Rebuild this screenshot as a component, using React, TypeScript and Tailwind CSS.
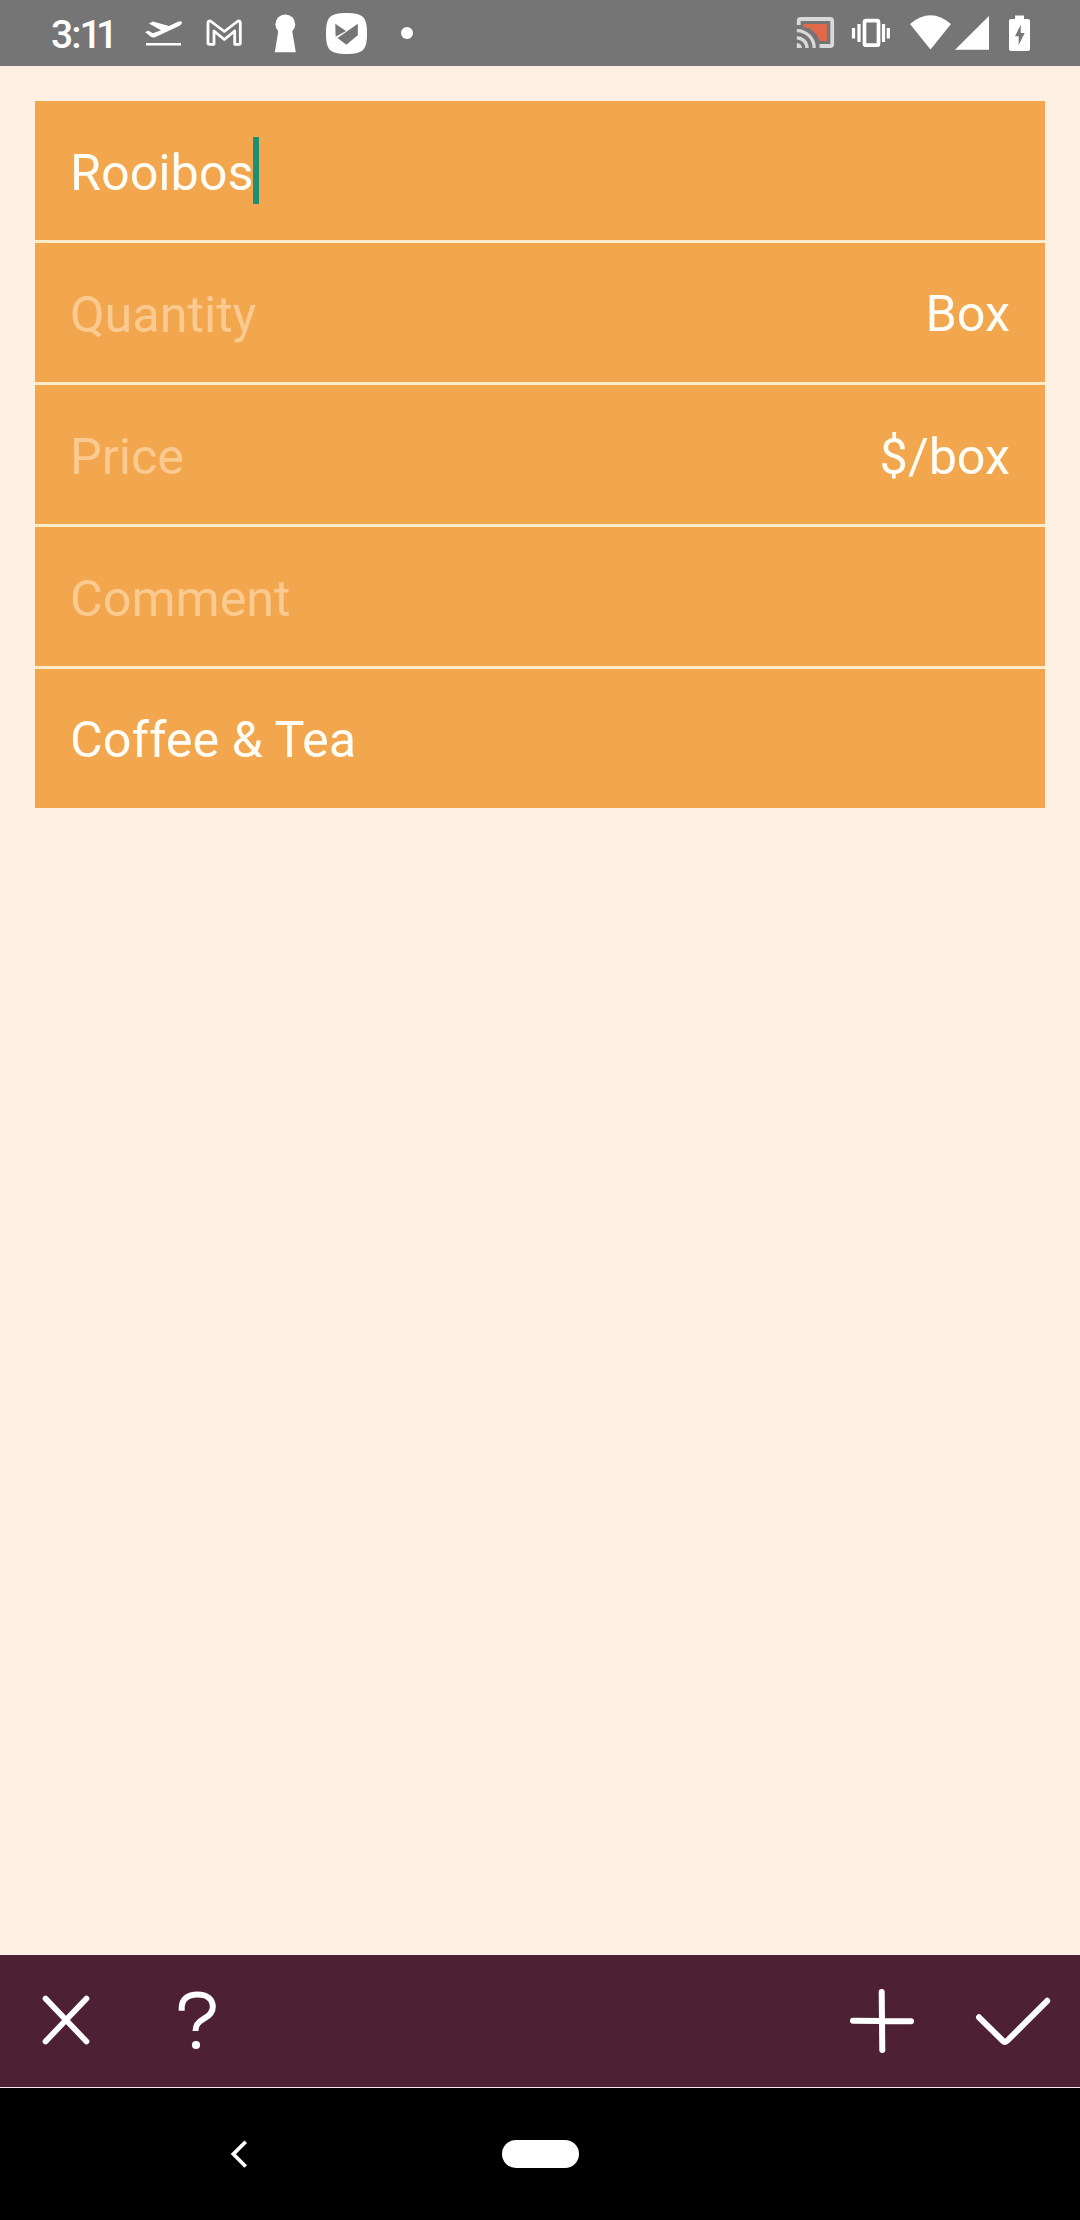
import type { ReactNode } from "react";

type GlyphProps = {
  box: string;
  className: string;
  children: ReactNode;
};

function Glyph({ box, className, children }: GlyphProps) {
  return (
    <svg viewBox={box} className={`block shrink-0 ${className}`} fill="none">
      {children}
    </svg>
  );
}

function StatusBar() {
  return (
    <header className="flex h-[66px] shrink-0 items-center justify-between bg-[#757575] pl-[51px] pr-[48px] text-white">
      <div className="flex items-center">
        <span className="w-[89px] pt-[5px] text-[39px] leading-none font-medium tracking-[-5.5px]">
          <span className="tracking-[-2px]">3:</span>11
        </span>
        <Glyph box="140 0 60 66" className="h-[66px] w-[60px]">
          <path
            d="M145 32l3.5-1.2 4.5 2.4 8-3L149 23.4l4-1.8L169 26l9-4.2q3.5-1.2 4 .8 .2 2-3 3.4L155 37.3q-2.5.9-4.5-.8z"
            fill="white"
          />
          <path d="M146 44.3h35" stroke="white" strokeWidth="2.6" />
        </Glyph>
        <Glyph box="200 0 60 66" className="h-[66px] w-[60px]">
          <path
            d="M208 22.8Q208 21 210.5 21L224.3 31.5 238 21Q240.3 21 240.3 23V43Q240.3 44.3 239 44.3H234.7V31L224.3 39.5 214 31V44.3H209.5Q208 44.3 208 43Z"
            stroke="white"
            strokeWidth="2.8"
            strokeLinejoin="round"
          />
        </Glyph>
        <Glyph box="260 0 60 66" className="h-[66px] w-[60px]">
          <circle cx="285.3" cy="24.3" r="9.9" fill="white" />
          <path d="M278.5 30H292l3.8 22.2h-21z" fill="white" />
        </Glyph>
        <Glyph box="320 0 60 66" className="h-[66px] w-[60px]">
          <path
            d="M346.5 13C363 13 367 17 367 33.5S363 54 346.5 54 326 50 326 33.5 330 13 346.5 13Z"
            fill="white"
          />
          <path
            d="M335.3 23.7L346 31 335.6 36.8ZM357.8 23.7V35.3L346.3 44.7 337.5 38Z"
            fill="#757575"
          />
        </Glyph>
        <span className="ml-[21px] size-3 rounded-full bg-white" />
      </div>

      <div className="flex items-center">
        <Glyph box="790 0 55 66" className="h-[66px] w-[55px]">
          <path d="M803 24H827V41H819.5Q816 29 803 26.5Z" fill="#e0694a" />
          <path
            d="M798.7 25V21Q798.7 19 800.7 19H830.2Q832.2 19 832.2 21V44Q832.2 46 830.2 46H819.5"
            stroke="#d9d9d9"
            strokeWidth="3.8"
          />
          <path
            d="M796.8 37.8A10.2 10.2 0 0 1 807 48M796.8 30.6A17.4 17.4 0 0 1 814.2 48"
            stroke="#d9d9d9"
            strokeWidth="3.3"
          />
          <path d="M796.8 43A5 5 0 0 1 801.8 48H796.8Z" fill="#d9d9d9" />
        </Glyph>
        <Glyph box="845 0 55 66" className="h-[66px] w-[55px]">
          <rect x="864.5" y="20.7" width="14" height="24.5" rx="1.5" stroke="white" strokeWidth="3.7" />
          <path
            d="M859 24v18M853.5 28v10.5M883.5 24v18M888.3 28v10.5"
            stroke="white"
            strokeWidth="3.2"
          />
        </Glyph>
        <Glyph box="900 0 100 66" className="h-[66px] w-[100px]">
          <path d="M910 24Q930.5 6.5 951 24L930.5 49.5Z" fill="white" />
          <path d="M955 49.7L989 16V49.7Z" fill="white" />
        </Glyph>
        <Glyph box="1000 0 32 66" className="h-[66px] w-[32px]">
          <path
            d="M1015 15.5H1024V19H1028Q1030 19 1030 21V49Q1030 51 1028 51H1011Q1009 51 1009 49V21Q1009 19 1011 19H1015Z"
            fill="white"
          />
          <path d="M1020.7 24.7L1015 36.3H1018.7V45L1024.7 33H1020.7Z" fill="#757575" />
        </Glyph>
      </div>
    </header>
  );
}

type RowProps = {
  value?: string;
  placeholder?: string;
  unit?: string;
  focused?: boolean;
  raised?: boolean;
  unitRaised?: boolean;
};

function Row({ value, placeholder, unit, focused, raised, unitRaised }: RowProps) {
  return (
    <div className="flex h-[139px] items-center justify-between bg-[#f2a74e] px-[35px] text-[50.3px] leading-none text-[#fffdf5]">
      <div className={`flex items-center ${raised ? "pt-[3px]" : "pt-[5px]"}`}>
        {value ? <span>{value}</span> : <span className="text-[#fbca91]">{placeholder}</span>}
        {focused && <span className="-mt-[5px] h-[67px] w-[6px] bg-[#1d8f72]" />}
      </div>
      {unit && <span className={unitRaised ? "pt-[3px]" : "pt-[5px]"}>{unit}</span>}
    </div>
  );
}

function Toolbar() {
  return (
    <div className="flex h-[132px] shrink-0 justify-between bg-[#4d2133]">
      <div className="flex">
        <button type="button" aria-label="Close">
          <Glyph box="0 1955 132 132" className="size-[132px]">
            <path
              d="M45.5 1998.5L86.5 2041.5M86.5 1998.5L45.5 2041.5"
              stroke="white"
              strokeWidth="5.7"
              strokeLinecap="round"
            />
          </Glyph>
        </button>
        <button type="button" aria-label="Help">
          <Glyph box="132 1955 132 132" className="size-[132px]">
            <path
              d="M181.7 2010.8V2008C181.7 1999 188 1994.5 197.5 1994.5C207 1994.5 212.8 1999 212.8 2007C212.8 2013 209 2016 204 2018.7C198 2022 195.5 2025 195.5 2031"
              stroke="white"
              strokeWidth="6"
            />
            <circle cx="196" cy="2045" r="4.1" fill="white" />
          </Glyph>
        </button>
      </div>
      <div className="flex">
        <button type="button" aria-label="Add">
          <Glyph box="816 1955 132 132" className="size-[132px]">
            <path
              d="M881.7 1992L882.3 2050M853 2020.7L911 2021.3"
              stroke="white"
              strokeWidth="6"
              strokeLinecap="round"
            />
          </Glyph>
        </button>
        <button type="button" aria-label="Save">
          <Glyph box="948 1955 132 132" className="size-[132px]">
            <path
              d="M979 2017.3L1002.5 2040.5Q1005 2043 1007.5 2040.5L1047.2 2000.8"
              stroke="white"
              strokeWidth="6"
              strokeLinecap="round"
            />
          </Glyph>
        </button>
      </div>
    </div>
  );
}

function NavigationBar() {
  return (
    <nav className="flex h-[133px] shrink-0 items-center border-t border-[#f6e9e4] bg-black">
      <Glyph box="220 2124 40 60" className="ml-[220px] h-[60px] w-[40px]">
        <path d="M245.7 2141.7L233.3 2154.1L245.7 2166.5" stroke="white" strokeWidth="3.7" />
      </Glyph>
      <span className="ml-[242px] h-[28px] w-[77px] rounded-[14px] bg-white" />
    </nav>
  );
}

export default function App() {
  return (
    <div className="flex h-[2220px] w-[1080px] flex-col overflow-hidden bg-[#fef1e4] font-['Roboto',sans-serif]">
      <StatusBar />
      <main className="flex-1 px-[35px] pt-[35px]">
        <div className="flex flex-col gap-[3px] bg-[#fdebcb]">
          <Row value="Rooibos" focused />
          <Row placeholder="Quantity" unit="Box" unitRaised />
          <Row placeholder="Price" unit="$/box" />
          <Row placeholder="Comment" />
          <Row value="Coffee & Tea" raised />
        </div>
      </main>
      <Toolbar />
      <NavigationBar />
    </div>
  );
}
